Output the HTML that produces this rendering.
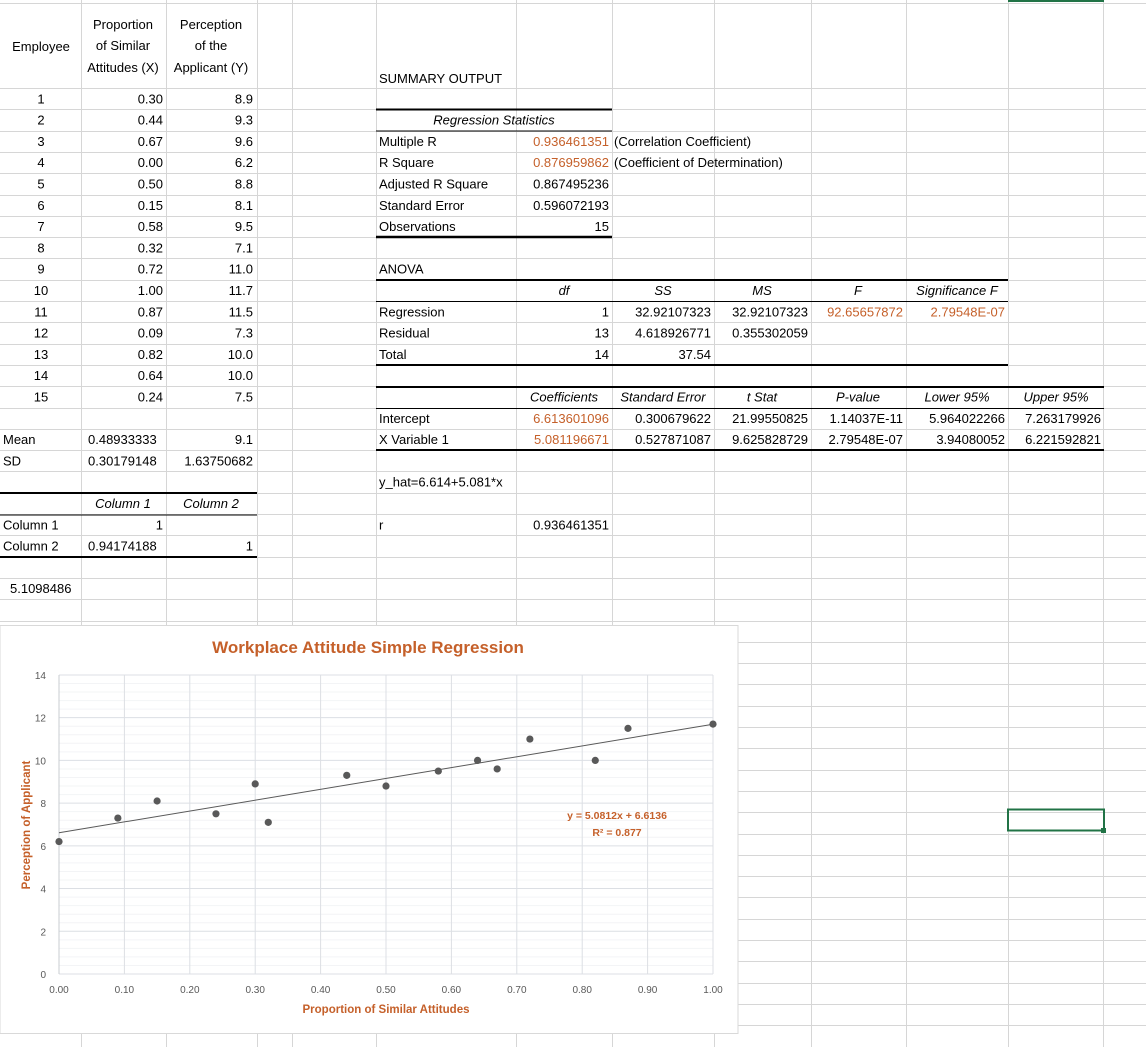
<!DOCTYPE html>
<html><head><meta charset="utf-8"><style>
html,body{margin:0;padding:0;background:#fff;}
svg{display:block;font-family:"Liberation Sans",sans-serif;}
.t{font-size:13px;fill:#000;}
.o{fill:#c5602a;}
.i{font-style:italic;}
.r{text-anchor:end;}
.c{text-anchor:middle;}
</style></head><body>
<svg width="1146" height="1047" viewBox="0 0 1146 1047" xmlns="http://www.w3.org/2000/svg">
<g stroke="#d6d6d6" stroke-width="1">
<line x1="0" y1="3.5" x2="1146" y2="3.5"/>
<line x1="81.5" y1="0" x2="81.5" y2="1047"/><line x1="166.5" y1="0" x2="166.5" y2="1047"/><line x1="257.5" y1="0" x2="257.5" y2="1047"/><line x1="292.5" y1="0" x2="292.5" y2="1047"/><line x1="376.5" y1="0" x2="376.5" y2="1047"/><line x1="516.5" y1="0" x2="516.5" y2="1047"/><line x1="612.5" y1="0" x2="612.5" y2="1047"/><line x1="714.5" y1="0" x2="714.5" y2="1047"/><line x1="811.5" y1="0" x2="811.5" y2="1047"/><line x1="906.5" y1="0" x2="906.5" y2="1047"/><line x1="1008.5" y1="0" x2="1008.5" y2="1047"/><line x1="1103.5" y1="0" x2="1103.5" y2="1047"/>
</g>
<g stroke="#d6d6d6" stroke-width="1" id="h"></g>
<script>
var g=document.getElementById('h');for(var k=0;k<46;k++){var y=Math.round(88+21.3*k)+0.5;var l=document.createElementNS('http://www.w3.org/2000/svg','line');l.setAttribute('x1',0);l.setAttribute('x2',1146);l.setAttribute('y1',y);l.setAttribute('y2',y);g.appendChild(l);}
</script>
<g stroke="#000">
<line x1="376" y1="109.5" x2="612" y2="109.5" stroke-width="2"/>
<line x1="376" y1="131" x2="612" y2="131" stroke-width="1"/>
<line x1="376" y1="237" x2="612" y2="237" stroke-width="2.5"/>
<line x1="376" y1="280" x2="1008" y2="280" stroke-width="2"/>
<line x1="376" y1="301.5" x2="1008" y2="301.5" stroke-width="1"/>
<line x1="376" y1="365" x2="1008" y2="365" stroke-width="2"/>
<line x1="376" y1="387" x2="1104" y2="387" stroke-width="2"/>
<line x1="376" y1="408.5" x2="1104" y2="408.5" stroke-width="1"/>
<line x1="376" y1="450" x2="1104" y2="450" stroke-width="2"/>
<line x1="0" y1="493" x2="257" y2="493" stroke-width="2"/>
<line x1="0" y1="515" x2="257" y2="515" stroke-width="1"/>
<line x1="0" y1="557" x2="257" y2="557" stroke-width="2"/>
</g>
<rect x="1008" y="0" width="96" height="2" fill="#217346"/>
<rect x="1008" y="809.5" width="96" height="21" fill="none" stroke="#217346" stroke-width="2"/>
<rect x="1101" y="828" width="5" height="5" fill="#217346"/>

<g class="t">
<text x="41" y="51" class="c">Employee</text>
<text x="123" y="29" class="c">Proportion</text><text x="123" y="50" class="c">of Similar</text><text x="123" y="72" class="c">Attitudes (X)</text>
<text x="211" y="29" class="c">Perception</text><text x="211" y="50" class="c">of the</text><text x="211" y="72" class="c">Applicant (Y)</text>
<text x="379" y="83">SUMMARY OUTPUT</text>
</g>
<g class="t" id="rows"></g>
<script>
var rows=[[1,'0.30','8.9'],[2,'0.44','9.3'],[3,'0.67','9.6'],[4,'0.00','6.2'],[5,'0.50','8.8'],[6,'0.15','8.1'],[7,'0.58','9.5'],[8,'0.32','7.1'],[9,'0.72','11.0'],[10,'1.00','11.7'],[11,'0.87','11.5'],[12,'0.09','7.3'],[13,'0.82','10.0'],[14,'0.64','10.0'],[15,'0.24','7.5']];
var R=document.getElementById('rows');var NS='http://www.w3.org/2000/svg';
function T(x,y,s,cls){var t=document.createElementNS(NS,'text');t.setAttribute('x',x);t.setAttribute('y',y);if(cls)t.setAttribute('class',cls);t.textContent=s;R.appendChild(t);}
function b(k){return 88+21.3*k-6;}
rows.forEach(function(r,i){var y=b(i+1);T(41,y,r[0],'c');T(163,y,r[1],'r');T(253,y,r[2],'r');});
T(3,b(17),'Mean');T(88,b(17),'0.48933333');T(253,b(17),'9.1','r');
T(3,b(18),'SD');T(88,b(18),'0.30179148');T(253,b(18),'1.63750682','r');
T(123,b(20),'Column 1','c i');T(211,b(20),'Column 2','c i');
T(3,b(21),'Column 1');T(163,b(21),'1','r');
T(3,b(22),'Column 2');T(88,b(22),'0.94174188');T(253,b(22),'1','r');
T(10,b(24),'5.1098486');
T(494,b(2),'Regression Statistics','c i');
T(379,b(3),'Multiple R');T(609,b(3),'0.936461351','r o');T(614,b(3),'(Correlation Coefficient)');
T(379,b(4),'R Square');T(609,b(4),'0.876959862','r o');T(614,b(4),'(Coefficient of Determination)');
T(379,b(5),'Adjusted R Square');T(609,b(5),'0.867495236','r');
T(379,b(6),'Standard Error');T(609,b(6),'0.596072193','r');
T(379,b(7),'Observations');T(609,b(7),'15','r');
T(379,b(9),'ANOVA');
[['df',564],['SS',663],['MS',762],['F',858],['Significance F',957]].forEach(function(a){T(a[1],b(10),a[0],'c i');});
T(379,b(11),'Regression');T(609,b(11),'1','r');T(711,b(11),'32.92107323','r');T(808,b(11),'32.92107323','r');T(903,b(11),'92.65657872','r o');T(1005,b(11),'2.79548E-07','r o');
T(379,b(12),'Residual');T(609,b(12),'13','r');T(711,b(12),'4.618926771','r');T(808,b(12),'0.355302059','r');
T(379,b(13),'Total');T(609,b(13),'14','r');T(711,b(13),'37.54','r');
[['Coefficients',564],['Standard Error',663],['t Stat',762],['P-value',858],['Lower 95%',957],['Upper 95%',1056]].forEach(function(a){T(a[1],b(15),a[0],'c i');});
T(379,b(16),'Intercept');T(609,b(16),'6.613601096','r o');T(711,b(16),'0.300679622','r');T(808,b(16),'21.99550825','r');T(903,b(16),'1.14037E-11','r');T(1005,b(16),'5.964022266','r');T(1101,b(16),'7.263179926','r');
T(379,b(17),'X Variable 1');T(609,b(17),'5.081196671','r o');T(711,b(17),'0.527871087','r');T(808,b(17),'9.625828729','r');T(903,b(17),'2.79548E-07','r');T(1005,b(17),'3.94080052','r');T(1101,b(17),'6.221592821','r');
T(379,b(19),'y_hat=6.614+5.081*x');
T(379,b(21),'r');T(609,b(21),'0.936461351','r');
</script>

<rect x="0" y="625.5" width="738" height="408" fill="#fff" stroke="#d9d9d9"/>
<g id="chart"></g>
<script>
var C=document.getElementById('chart');
function L(x1,y1,x2,y2,c,w){var l=document.createElementNS(NS,'line');l.setAttribute('x1',x1);l.setAttribute('y1',y1);l.setAttribute('x2',x2);l.setAttribute('y2',y2);l.setAttribute('stroke',c);l.setAttribute('stroke-width',w||1);C.appendChild(l);}
function X(v){return 59+654*v;}function Y(v){return 974-21.36*v;}
for(var m=0;m<=35;m++){if(m%5==0)continue;var y=Y(m*0.4);L(59,y,713,y,'#f3f4f6');}
for(var m=0;m<=7;m++){var y=Y(m*2);L(59,y,713,y,'#dcdfe4');}
for(var i=0;i<=10;i++){L(X(i/10),Y(14),X(i/10),974,'#dcdfe4');}
L(59,Y(14),59,974,'#c8ccd2');
function CT(x,y,s,st){var t=document.createElementNS(NS,'text');t.setAttribute('x',x);t.setAttribute('y',y);t.setAttribute('style',st);t.textContent=s;C.appendChild(t);return t;}
for(var i=0;i<=7;i++){CT(46,Y(2*i)+4,String(2*i),'font-size:10px;fill:#595959;text-anchor:end');}
for(var i=0;i<=10;i++){CT(X(i/10),993,(i/10).toFixed(2),'font-size:10px;fill:#595959;text-anchor:middle');}
L(X(0),Y(6.6136),X(1),Y(11.6948),'#595959',1);
rows.forEach(function(r){var c=document.createElementNS(NS,'circle');c.setAttribute('cx',X(+r[1]));c.setAttribute('cy',Y(+r[2]));c.setAttribute('r',3.6);c.setAttribute('fill','#595959');C.appendChild(c);});
CT(368,653,'Workplace Attitude Simple Regression','font-size:17px;font-weight:bold;fill:#c5602a;text-anchor:middle');
CT(386,1013,'Proportion of Similar Attitudes','font-size:11.5px;font-weight:bold;fill:#c5602a;text-anchor:middle');
CT(617,819,'y = 5.0812x + 6.6136','font-size:10.5px;font-weight:bold;fill:#c5602a;text-anchor:middle');
CT(617,836,'R² = 0.877','font-size:10.5px;font-weight:bold;fill:#c5602a;text-anchor:middle');
var yt=CT(0,0,'Perception of Applicant','font-size:11.5px;font-weight:bold;fill:#c5602a;text-anchor:middle');yt.setAttribute('transform','translate(30,825) rotate(-90)');
</script>
</svg>
</body></html>
